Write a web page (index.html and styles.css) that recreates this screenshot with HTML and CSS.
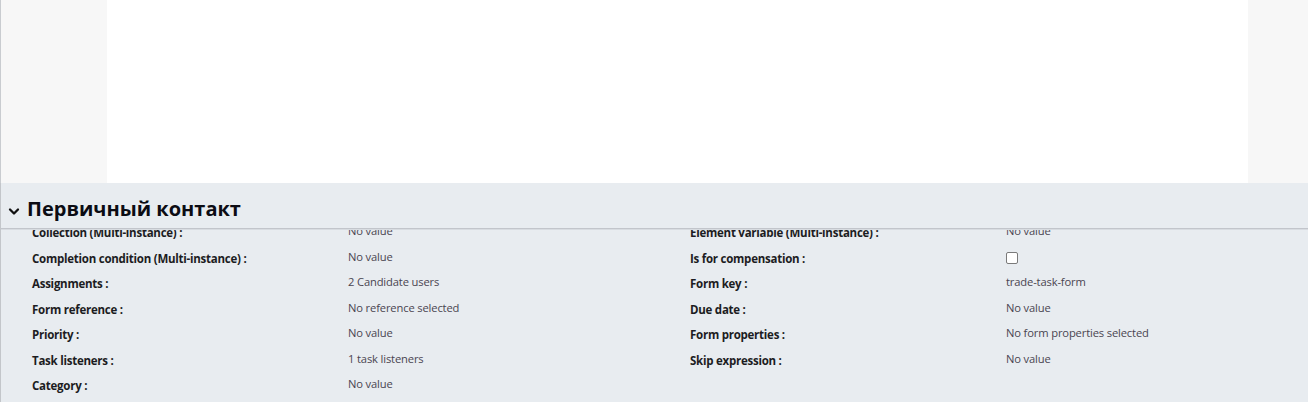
FILE: index.html
```html
<!DOCTYPE html>
<html lang="ru">
<head>
<meta charset="utf-8">
<link rel="stylesheet" href="styles.css">
</head>
<body>
<div class="top">
  <div class="side-left"></div>
  <div class="canvas"></div>
  <div class="side-right"></div>
</div>
<section class="panel">
  <header class="panel-head">
    <svg class="chev" width="12" height="10" viewBox="0 0 12 10"><path d="M2 2.5 L6 6.5 L10 2.5" fill="none" stroke="#111" stroke-width="2.3" stroke-linecap="round" stroke-linejoin="round"/></svg>
    <h2 class="title">Первичный контакт</h2>
  </header>
  <div class="props">
    <div class="lbl">Collection (Multi-instance) :</div><div class="val">No value</div>
    <div class="lbl">Element variable (Multi-instance) :</div><div class="val">No value</div>

    <div class="lbl">Completion condition (Multi-instance) :</div><div class="val">No value</div>
    <div class="lbl">Is for compensation :</div><div class="val"><span class="check"></span></div>

    <div class="lbl">Assignments :</div><div class="val">2 Candidate users</div>
    <div class="lbl">Form key :</div><div class="val">trade-task-form</div>

    <div class="lbl">Form reference :</div><div class="val">No reference selected</div>
    <div class="lbl">Due date :</div><div class="val">No value</div>

    <div class="lbl">Priority :</div><div class="val">No value</div>
    <div class="lbl">Form properties :</div><div class="val">No form properties selected</div>

    <div class="lbl">Task listeners :</div><div class="val">1 task listeners</div>
    <div class="lbl">Skip expression :</div><div class="val">No value</div>

    <div class="lbl">Category :</div><div class="val">No value</div>
    <div class="lbl"></div><div class="val"></div>
  </div>
</section>
</body>
</html>
```
FILE: styles.css
```css
html, body {
  margin: 0;
  padding: 0;
  height: 402px;
  overflow: hidden;
  background: #e8ecf0;
  font-family: "Open Sans", "Noto Sans", sans-serif;
}
.top {
  display: flex;
  height: 183px;
  border-left: 1px solid #c9ccd0;
}
.side-left {
  width: 106px;
  background: #f7f7f7;
}
.canvas {
  flex: 1;
  background: #ffffff;
}
.side-right {
  width: 60px;
  background: #f7f7f7;
}
.panel {
  border-left: 1px solid #c3c6ca;
  height: 219px;
  overflow: hidden;
  background: #e8ecf0;
}
.panel-head {
  position: relative;
  z-index: 2;
  display: flex;
  align-items: center;
  gap: 7px;
  height: 45px;
  padding-left: 7px;
  background: #e8ecf0;
  border-bottom: 1px solid #c2c5cb;
  box-shadow: 0 1px 0 #d8dce1;
}
.chev {
  margin-top: 12px;
}
.title {
  margin: 0;
  padding-top: 6px;
  font-size: 20px;
  font-weight: 700;
  color: #0c0c14;
}
.props {
  position: relative;
  z-index: 1;
  margin-top: -6px;
  display: grid;
  grid-template-columns: 316px 342px 316px 1fr;
  grid-auto-rows: 25.5px;
  padding-left: 31px;
}
.lbl {
  font-size: 11.5px;
  letter-spacing: -0.25px;
  font-weight: 700;
  color: #1c1c22;
  padding-top: 2px;
  line-height: 16px;
  white-space: nowrap;
}
.val {
  font-size: 11.2px;
  letter-spacing: -0.15px;
  color: #4a4550;
  padding-top: 0;
  line-height: 16px;
  white-space: nowrap;
}
.check {
  display: inline-block;
  width: 10px;
  height: 10px;
  margin-top: 3px;
  border: 1px solid #7a7a7a;
  border-radius: 2px;
  background: #fff;
}
```
